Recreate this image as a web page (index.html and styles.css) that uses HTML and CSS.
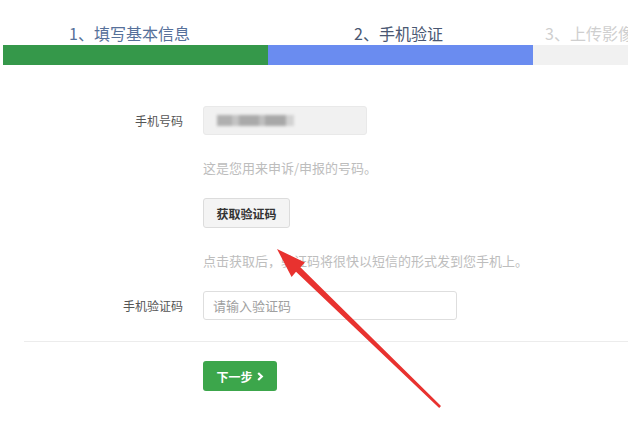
FILE: index.html
```html
<!DOCTYPE html>
<html lang="zh">
<head>
<meta charset="utf-8">
<link rel="stylesheet" href="styles.css">
</head>
<body>
<div class="page">
  <div class="steps">
    <div class="step step-done">
      <div class="step-label">1、填写基本信息</div>
      <div class="step-bar"></div>
    </div>
    <div class="step step-current">
      <div class="step-label">2、手机验证</div>
      <div class="step-bar"></div>
    </div>
    <div class="step step-todo">
      <div class="step-label">3、上传影像</div>
      <div class="step-bar"></div>
    </div>
  </div>

  <div class="form">
    <div class="row row-phone">
      <div class="label">手机号码</div>
      <div class="field field-readonly"><span class="blur"></span></div>
    </div>
    <div class="row row-hint1">
      <div class="hint">这是您用来申诉/申报的号码。</div>
    </div>
    <div class="row row-send">
      <div class="btn btn-send">获取验证码</div>
    </div>
    <div class="row row-hint2">
      <div class="hint">点击获取后，验证码将很快以短信的形式发到您手机上。</div>
    </div>
    <div class="row row-code">
      <div class="label">手机验证码</div>
      <div class="field field-code">请输入验证码</div>
    </div>
    <div class="divider"></div>
    <div class="row row-next">
      <div class="btn btn-next">下一步<svg class="chev" width="7" height="9" viewBox="0 0 7 9"><path d="M1.2 1 L4.8 4.5 L1.2 8" fill="none" stroke="#fff" stroke-width="2.2"/></svg></div>
    </div>
  </div>

  <svg class="arrow" width="628" height="446" viewBox="0 0 628 446">
    <polygon points="277,249 305,262.5 300.4,267.3 441,406 439.2,408 296,271.7 291.6,277" fill="#e8322f"/>
  </svg>
</div>
</body>
</html>
```

FILE: styles.css
```css
html, body {
  margin: 0;
  padding: 0;
  background: #ffffff;
}

.page {
  position: relative;
  width: 628px;
  height: 446px;
  overflow: hidden;
  font-family: "Noto Sans CJK SC", "Noto Sans", sans-serif;
}

.steps {
  display: flex;
  margin-left: 3px;
}

.step {
  display: flex;
  flex-direction: column;
}

.step-done, .step-current {
  width: 265px;
}

.step-todo {
  flex: 1;
  min-width: 0;
}

.step-label {
  padding-top: 22px;
  height: 22px;
  line-height: 22px;
  margin-bottom: 1px;
  font-size: 16px;
  white-space: nowrap;
  overflow: hidden;
}

.step-done .step-label {
  padding-left: 66px;
  color: #56709a;
}

.step-current .step-label {
  padding-left: 86px;
  color: #4a5772;
}

.step-todo .step-label {
  padding-left: 12px;
  color: #cfcfcf;
}

.step-bar {
  height: 20px;
}

.step-done .step-bar { background: #35984a; }
.step-current .step-bar { background: #6a8cf0; }
.step-todo .step-bar { background: #f1f1f1; }

.form {
  padding-top: 41px;
}

.row {
  display: grid;
  grid-template-columns: 183px auto;
  column-gap: 20px;
  align-items: center;
  justify-content: start;
}

.row > :only-child {
  grid-column: 2;
}

.label {
  text-align: right;
  font-size: 12px;
  color: #555;
}

.field {
  box-sizing: border-box;
  height: 29px;
  border-radius: 3px;
  display: flex;
  align-items: center;
  padding-left: 9px;
  font-size: 13px;
}

.field-readonly {
  width: 164px;
  background: #f1f1f1;
  border: 1px solid #e9e9e9;
  padding-left: 13px;
}

.blur {
  display: block;
  width: 77px;
  height: 11px;
  background: linear-gradient(90deg, #b0b0b0 0 20%, #c4c4c4 20% 28%, #aaaaaa 28% 55%, #bfbfbf 55% 62%, #a8a8a8 62% 90%, #d2d2d2 90%);
  filter: blur(1.8px);
}

.field-code {
  width: 254px;
  background: #fff;
  border: 1px solid #dedede;
  color: #a0a0a0;
}

.hint {
  font-size: 13px;
  line-height: 18px;
  color: #bdbdbd;
  white-space: nowrap;
}

.row-hint1 { margin-top: 24px; }
.row-send { margin-top: 21px; }
.row-hint2 { margin-top: 24px; }
.row-code { margin-top: 21px; }

.btn {
  box-sizing: border-box;
  height: 30px;
  border-radius: 3px;
  display: flex;
  align-items: center;
  justify-content: center;
  font-size: 12px;
  font-weight: bold;
}

.btn-send {
  width: 87px;
  background: #f4f4f4;
  border: 1px solid #dcdcdc;
  color: #333;
}

.divider {
  margin-top: 21px;
  margin-left: 24px;
  height: 1px;
  background: #ececec;
}

.row-next { margin-top: 19px; }

.btn-next {
  width: 74px;
  background: #3ca64b;
  color: #fff;
  gap: 4px;
}

.chev {
  display: block;
}

.arrow {
  position: absolute;
  left: 0;
  top: 0;
  pointer-events: none;
}
```
